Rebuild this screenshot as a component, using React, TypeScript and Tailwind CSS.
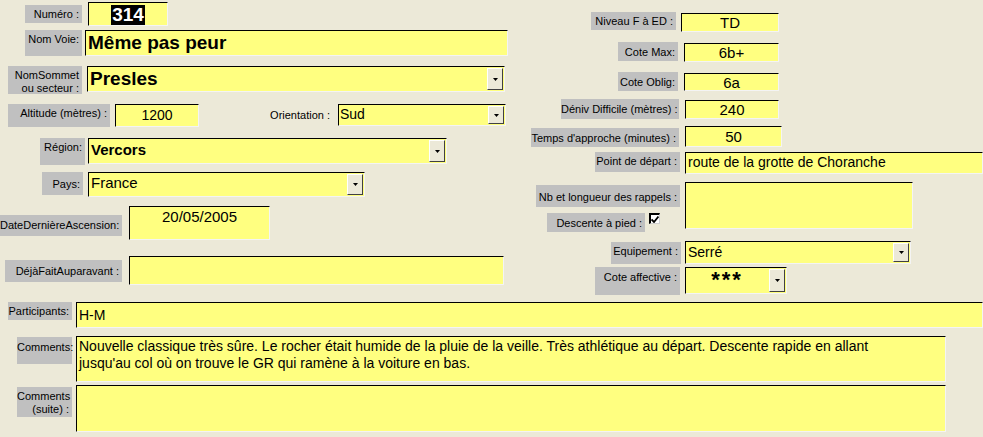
import React from 'react';

const FONT = { fontFamily: '"Liberation Sans", Arial, sans-serif' };

const labelBase = 'shrink-0 bg-[#c0c0c0] text-right text-[11px] leading-[13px] pr-[3px] text-black whitespace-nowrap';
const fieldBase =
  'shrink-0 bg-[#ffff80] border-t border-l border-t-black border-l-black border-r border-b border-r-[#f4f4f4] border-b-[#f4f4f4] text-black overflow-hidden whitespace-nowrap';

const Label = ({ className = '', children }: { className?: string; children: React.ReactNode }) => (
  <div className={`${labelBase} ${className}`}>{children}</div>
);

const Field = ({ className = '', children }: { className?: string; children?: React.ReactNode }) => (
  <div className={`${fieldBase} ${className}`}>{children}</div>
);

const DropButton = () => (
  <div className="w-[16px] shrink-0 self-stretch m-[1px] bg-[#ece9d8] border-t border-l border-t-white border-l-white border-r border-b border-r-[#404040] border-b-[#404040] flex items-center justify-center">
    <svg width="5" height="3" viewBox="0 0 5 3">
      <path d="M0 0 H5 L2.5 3 Z" fill="#000" />
    </svg>
  </div>
);

const Combo = ({
  className = '',
  textClass = '',
  children,
}: {
  className?: string;
  textClass?: string;
  children?: React.ReactNode;
}) => (
  <div className={`${fieldBase} flex ${className}`}>
    <div className={`flex-1 overflow-hidden ${textClass}`}>{children}</div>
    <DropButton />
  </div>
);

const CheckBox = () => (
  <div className="shrink-0 w-[11px] h-[11px] bg-white border-t-2 border-l-2 border-t-black border-l-black border-r border-b border-r-[#d0d0d0] border-b-[#d0d0d0] flex items-center justify-center">
    <svg width="8" height="7" viewBox="0 0 8 7">
      <path d="M0.5 3.5 L3 6 L7.5 0.5" stroke="#000" strokeWidth="1.8" fill="none" />
    </svg>
  </div>
);

export default function App() {
  return (
    <div className="w-[983px] h-[437px] bg-[#ece9d8] overflow-hidden" style={FONT}>
      <div className="flex">
        {/* left column */}
        <div className="w-[520px] shrink-0">
          <div className="flex items-start pt-[2px]">
            <Label className="ml-[25px] mt-[3px] w-[57px] h-[18px] pt-[3px]">Numéro :</Label>
            <Field className="ml-[6px] w-[80px] h-[24px] flex justify-center items-start pt-[2px]">
              <span className="bg-black text-white font-bold text-[19px] leading-[20px] px-[1px]">314</span>
            </Field>
          </div>
          <div className="flex items-start mt-[4px]">
            <Label className="ml-[25px] w-[57px] h-[26px] pt-[3px]">Nom Voie:</Label>
            <Field className="ml-[3px] w-[423px] h-[26px] pl-[2px] pt-[1px] font-bold text-[19px] leading-[22px]">
              Même pas peur
            </Field>
          </div>
          <div className="flex items-start mt-[10px]">
            <Label className="ml-[8px] w-[74px] h-[28px] pt-[3px]">
              NomSommet
              <br />
              ou secteur :
            </Label>
            <Combo className="ml-[5px] w-[418px] h-[26px]" textClass="pl-[2px] pt-[1px] font-bold text-[19px] leading-[22px]">
              Presles
            </Combo>
          </div>
          <div className="flex items-start mt-[10px]">
            <Label className="ml-[8px] w-[102px] h-[23px] pt-[3px]">Altitude (mètres) :</Label>
            <Field className="ml-[5px] w-[84px] h-[23px] text-center text-[14px] leading-[17px] pt-[2px]">1200</Field>
            <div className="ml-[71px] w-[62px] shrink-0 text-right text-[11px] leading-[13px] pt-[5px] pr-[2px] whitespace-nowrap">
              Orientation :
            </div>
            <Combo className="ml-[6px] w-[168px] h-[22px]" textClass="pl-[1px] pt-[1px] text-[14px] leading-[17px]">
              Sud
            </Combo>
          </div>
          <div className="flex items-start mt-[11px]">
            <Label className="ml-[40px] w-[45px] h-[27px] pt-[3px]">Région:</Label>
            <Combo className="ml-[3px] w-[359px] h-[26px]" textClass="pl-[2px] pt-[2px] font-bold text-[15px] leading-[18px]">
              Vercors
            </Combo>
          </div>
          <div className="flex items-start mt-[7px]">
            <Label className="ml-[42px] w-[41px] h-[23px] pt-[6px]">Pays:</Label>
            <Combo className="ml-[5px] w-[277px] h-[25px]" textClass="pl-[2px] pt-[1px] text-[15px] leading-[17px]">
              France
            </Combo>
          </div>
          <div className="flex items-start mt-[9px]">
            <Label className="mt-[9px] w-[122px] h-[21px] pt-[4px] pr-[1px]">DateDernièreAscension:</Label>
            <Field className="ml-[7px] w-[141px] h-[34px] text-center text-[15px] leading-[18px] pt-[1px]">20/05/2005</Field>
          </div>
          <div className="flex items-start mt-[16px]">
            <Label className="ml-[5px] mt-[4px] w-[117px] h-[22px] pt-[5px]">DéjàFaitAuparavant :</Label>
            <Field className="ml-[7px] w-[375px] h-[29px]" />
          </div>
        </div>

        {/* right column */}
        <div className="flex-1">
          <div className="flex items-start pt-[12px]">
            <Label className="ml-[71px] w-[85px] h-[18px] pt-[3px]">Niveau F à ED :</Label>
            <Field className="ml-[5px] mt-[1px] w-[98px] h-[19px] text-center text-[15px] leading-[17px]">TD</Field>
          </div>
          <div className="flex items-start mt-[10px]">
            <Label className="ml-[98px] w-[60px] h-[19px] pt-[4px]">Cote Max:</Label>
            <Field className="ml-[6px] mt-[1px] w-[95px] h-[19px] text-center text-[15px] leading-[17px]">6b+</Field>
          </div>
          <div className="flex items-start mt-[10px]">
            <Label className="ml-[98px] w-[60px] h-[19px] pt-[4px]">Cote Oblig:</Label>
            <Field className="ml-[6px] mt-[1px] w-[95px] h-[18px] text-center text-[15px] leading-[17px]">6a</Field>
          </div>
          <div className="flex items-start mt-[8px]">
            <Label className="ml-[41px] w-[118px] h-[20px] pt-[4px]">Déniv Difficile (mètres) :</Label>
            <Field className="ml-[6px] mt-[1px] w-[94px] h-[19px] text-center text-[15px] leading-[17px]">240</Field>
          </div>
          <div className="flex items-start mt-[7px]">
            <Label className="ml-[11px] mt-[2px] w-[148px] h-[19px] pt-[4px]">Temps d'approche (minutes) :</Label>
            <Field className="ml-[6px] w-[97px] h-[21px] text-center text-[15px] leading-[17px] pt-[1px]">50</Field>
          </div>
          <div className="flex items-start mt-[5px]">
            <Label className="ml-[75px] w-[85px] h-[20px] pt-[3px]">Point de départ :</Label>
            <Field className="ml-[5px] w-[298px] h-[22px] pl-[2px] pt-[1px] text-[14px] leading-[17px]">
              route de la grotte de Choranche
            </Field>
          </div>
          <div className="flex items-start mt-[8px]">
            <div className="w-[160px] shrink-0">
              <Label className="ml-[16px] mt-[3px] w-[144px] h-[22px] pt-[6px]">Nb et longueur des rappels :</Label>
              <div className="flex items-start mt-[6px]">
                <Label className="ml-[27px] w-[98px] h-[19px] pt-[4px]">Descente à pied :</Label>
                <div className="ml-[4px]">
                  <CheckBox />
                </div>
              </div>
            </div>
            <Field className="ml-[5px] w-[228px] h-[47px]" />
          </div>
          <div className="flex items-start mt-[9px]">
            <Label className="ml-[91px] mt-[1px] w-[70px] h-[22px] pt-[3px]">Equipement :</Label>
            <Combo className="ml-[4px] w-[226px] h-[23px]" textClass="pl-[2px] pt-[2px] text-[14px] leading-[17px]">
              Serré
            </Combo>
          </div>
          <div className="flex items-start mt-[3px]">
            <Label className="ml-[75px] w-[85px] h-[28px] pt-[4px]">Cote affective :</Label>
            <Combo className="ml-[5px] w-[102px] h-[27px]" textClass="text-center pt-[1px] font-bold text-[22px] leading-[22px] tracking-[2px]">
              ***
            </Combo>
          </div>
        </div>
      </div>

      {/* bottom rows */}
      <div className="flex items-start mt-[7px]">
        <Label className="ml-[8px] w-[64px] h-[18px] pt-[3px]">Participants:</Label>
        <Field className="ml-[4px] flex-1 h-[26px] pl-[2px] pt-[4px] text-[14px] leading-[17px]">H-M</Field>
      </div>
      <div className="flex items-start mt-[8px]">
        <Label className="ml-[17px] mt-[1px] w-[55px] h-[27px] pt-[4px]">Comments:</Label>
        <Field className="ml-[4px] w-[870px] h-[46px] pl-[2px] pt-[1px] text-[14px] leading-[17px] whitespace-normal">
          Nouvelle classique très sûre. Le rocher était humide de la pluie de la veille. Très athlétique au départ. Descente rapide en allant
          <br />
          jusqu'au col où on trouve le GR qui ramène à la voiture en bas.
        </Field>
      </div>
      <div className="flex items-start mt-[3px]">
        <Label className="ml-[17px] mt-[2px] w-[55px] h-[30px] pt-[3px]">
          Comments
          <br />
          (suite) :
        </Label>
        <Field className="ml-[4px] w-[870px] h-[47px]" />
      </div>
    </div>
  );
}
